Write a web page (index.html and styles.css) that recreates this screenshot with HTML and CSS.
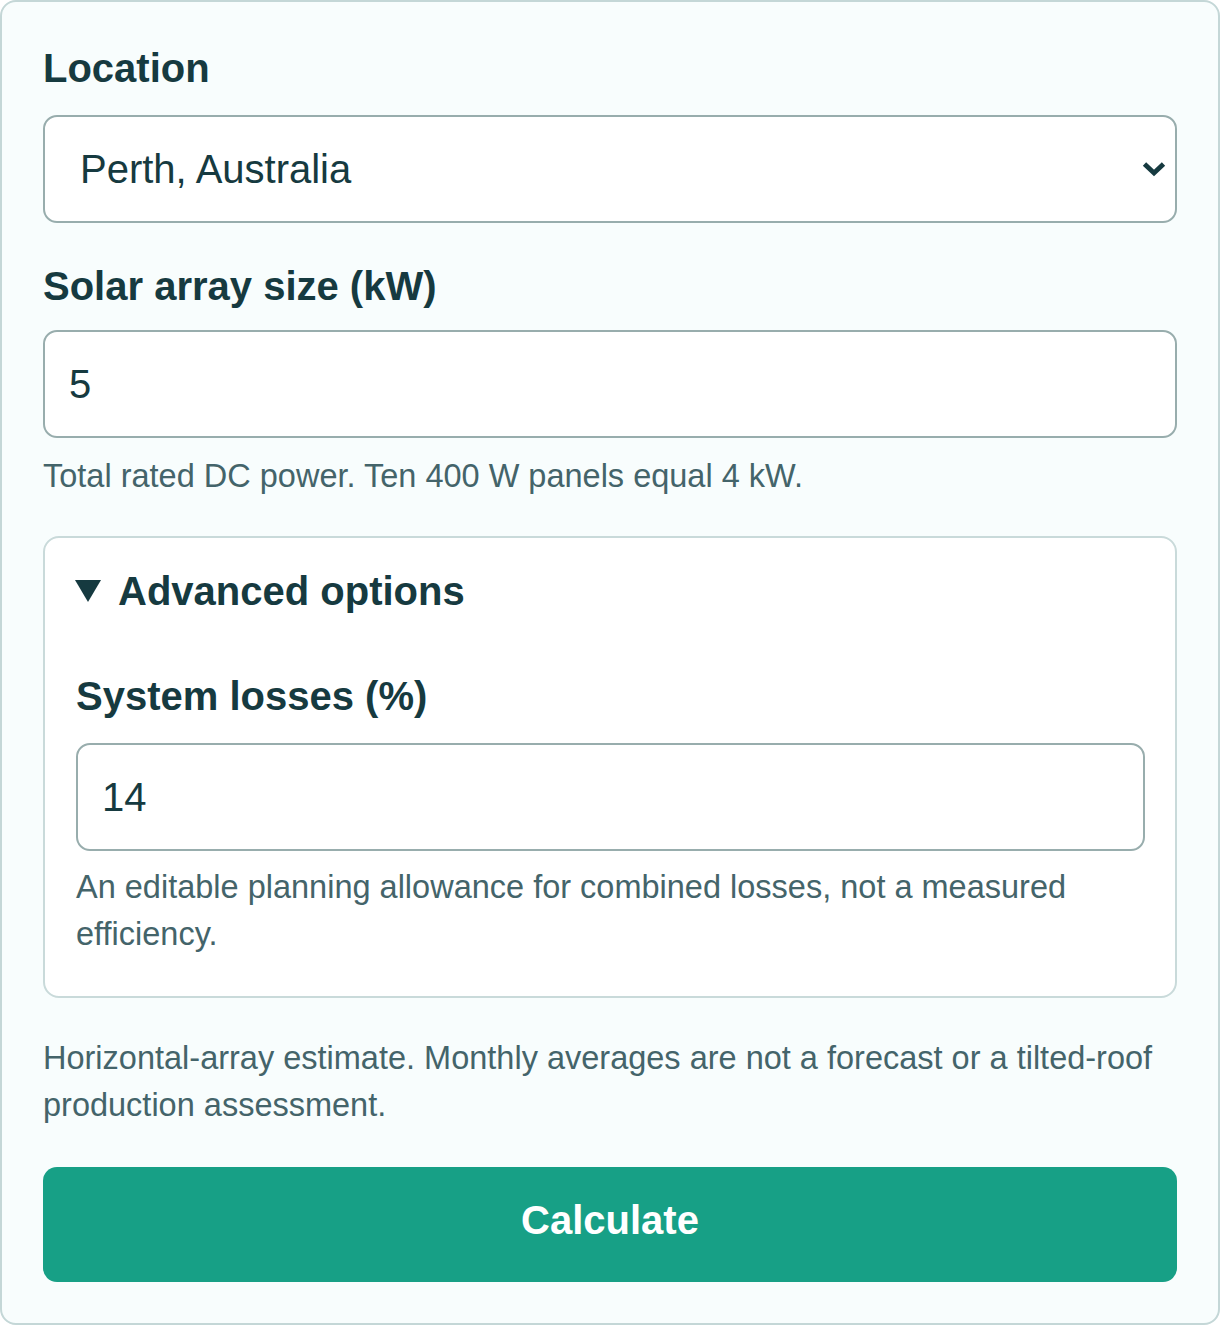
FILE: index.html
```html
<!DOCTYPE html>
<html lang="en">
<head>
<meta charset="utf-8">
<title>Solar estimate</title>
<link rel="stylesheet" href="styles.css">
</head>
<body>
<form class="card">
  <label class="label label-location">Location</label>
  <div class="select">
    <span class="select-value">Perth, Australia</span>
    <svg class="chevron" width="24" height="16" viewBox="0 0 24 16" aria-hidden="true">
      <path d="M2.5 3 L12 12 L21.5 3" fill="none" stroke="#163a40" stroke-width="4.8" stroke-linejoin="miter"/>
    </svg>
  </div>
  <label class="label label-size">Solar array size (kW)</label>
  <input class="input input-size" type="text" value="5">
  <p class="help help-size">Total rated DC power. Ten 400 W panels equal 4 kW.</p>
  <details class="advanced" open>
    <summary class="summary">
      <svg class="tri" width="26" height="22" viewBox="0 0 26 22" aria-hidden="true">
        <path d="M0 0 H26 L13 22 Z" fill="#163a40"/>
      </svg>
      <span>Advanced options</span>
    </summary>
    <label class="label label-losses">System losses (%)</label>
    <input class="input input-losses" type="text" value="14">
    <p class="help help-losses">An editable planning allowance for combined losses, not a measured efficiency.</p>
  </details>
  <p class="help note">Horizontal-array estimate. Monthly averages are not a forecast or a tilted-roof production assessment.</p>
  <button class="button" type="button">Calculate</button>
</form>
</body>
</html>
```

FILE: styles.css
```css
html, body {
  margin: 0;
  padding: 0;
  background: #ffffff;
}

body {
  font-family: "Liberation Sans", Arial, sans-serif;
  color: #163a40;
}

.card {
  box-sizing: border-box;
  width: 1220px;
  border: 2px solid #c4d7d7;
  border-radius: 16px;
  background: #f8fdfd;
  padding: 41px 41px 41px 41px;
  display: flex;
  flex-direction: column;
}

.label {
  display: block;
  font-size: 40px;
  line-height: 50px;
  font-weight: 700;
  color: #163a40;
}

.label-location { margin-bottom: 22px; }
.label-size { margin-top: 38px; margin-bottom: 19px; }
.label-losses { margin-top: 55px; margin-bottom: 22px; }

.select {
  box-sizing: border-box;
  height: 108px;
  border: 2px solid #98adad;
  border-radius: 14px;
  background: #ffffff;
  display: flex;
  align-items: center;
  justify-content: space-between;
  padding: 0 9px 0 35px;
}

.select-value {
  font-size: 40px;
  line-height: 50px;
  color: #163a40;
}

.chevron {
  display: block;
}

.input {
  box-sizing: border-box;
  display: block;
  width: 100%;
  height: 108px;
  margin: 0;
  border: 2px solid #98adad;
  border-radius: 14px;
  background: #ffffff;
  padding: 0 24px;
  font-family: "Liberation Sans", Arial, sans-serif;
  font-size: 40px;
  color: #163a40;
  outline: none;
}

.help {
  margin: 0;
  font-size: 32.5px;
  line-height: 47px;
  color: #44646a;
}

.help-size { margin-top: 15px; }
.help-losses { margin-top: 13px; }

.advanced {
  margin-top: 36px;
  border: 2px solid #c9dada;
  border-radius: 16px;
  background: #ffffff;
  padding: 28px 31px 38px 30px;
}

.summary {
  list-style: none;
  display: flex;
  align-items: center;
  gap: 17px;
  font-size: 40px;
  line-height: 50px;
  font-weight: 700;
  color: #163a40;
  cursor: pointer;
}

.summary::-webkit-details-marker {
  display: none;
}

.tri {
  display: block;
  margin-top: -1px;
}

.label-losses,
.input-losses,
.help-losses {
  margin-left: 1px;
}

.note { margin-top: 37px; }

.button {
  margin-top: 38px;
  height: 115px;
  border: none;
  border-radius: 14px;
  background: #17a086;
  color: #ffffff;
  padding: 0 0 8px 0;
  font-family: "Liberation Sans", Arial, sans-serif;
  font-size: 40px;
  font-weight: 700;
  cursor: pointer;
}
```
